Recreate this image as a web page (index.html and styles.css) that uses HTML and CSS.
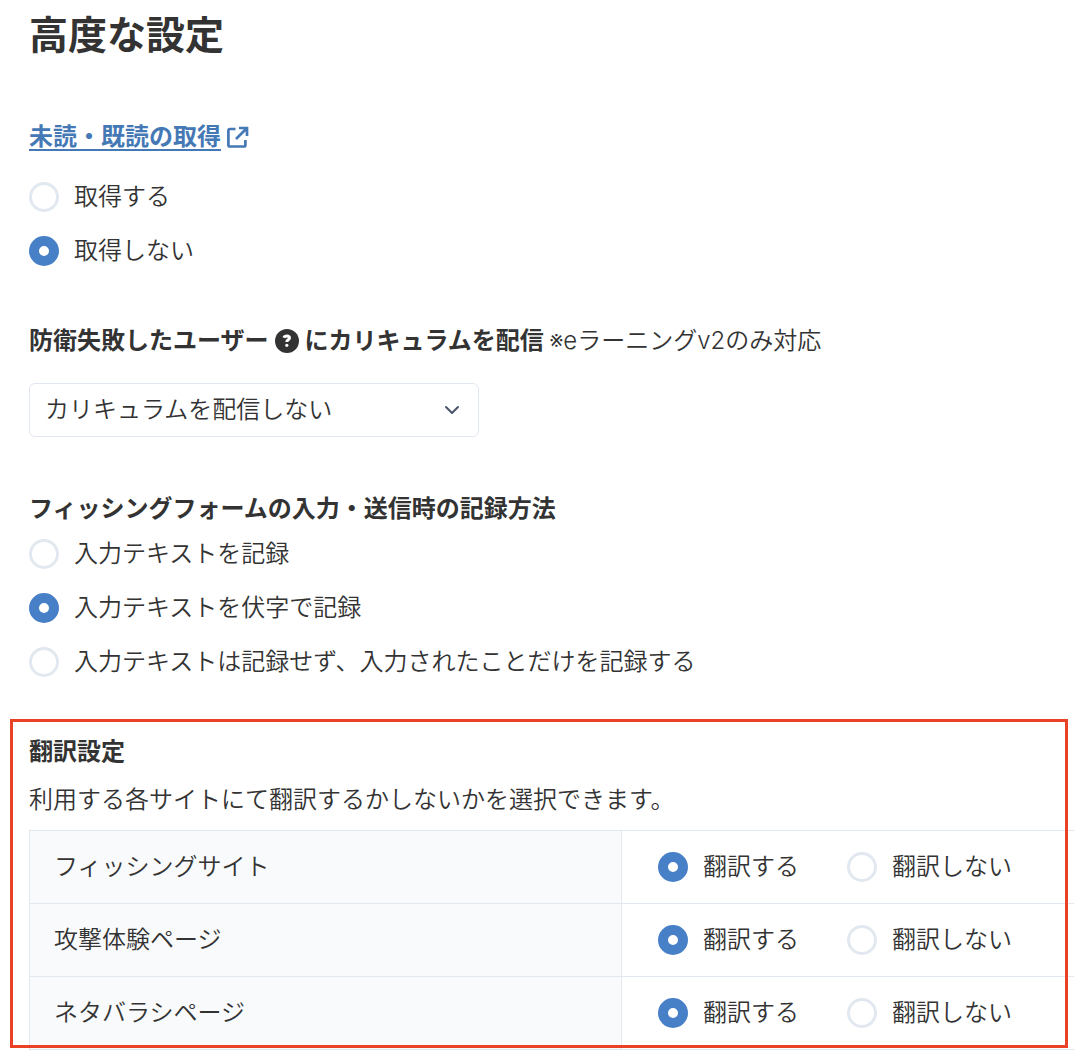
FILE: index.html
```
<!DOCTYPE html>
<html lang="ja">
<head>
<meta charset="utf-8">
<meta name="viewport" content="width=device-width, initial-scale=1">
<title>高度な設定</title>
<link rel="stylesheet" href="styles.css">
</head>
<body>
<form class="settings">
    <h1>高度な設定</h1>

    <section role="radiogroup" aria-labelledby="read-title">
        <h2 id="read-title"><a href="#"><span>未読・既読の取得</span><svg class="external" viewBox="0 0 24 24" aria-hidden="true"><path d="M10.500 4H5a1.600 1.600 0 0 0-1.600 1.600V19.900a1.600 1.600 0 0 0 1.600 1.600H18.800a1.600 1.600 0 0 0 1.600-1.600v-5M14 3h8V11M21.500 3.500L11 14"/></svg></a></h2>
        <div class="options spaced">
            <label class="option"><input type="radio" name="read" value="true">取得する</label>
            <label class="option"><input type="radio" name="read" value="false" checked>取得しない</label>
        </div>
    </section>

    <section>
        <h2><label for="curriculum">防衛失敗したユーザー</label><svg class="help" viewBox="0 0 24 24" aria-hidden="true"><circle cx="12" cy="12" r="12"/><path d="M8.900 8.800C9.300 7.600 10.400 7 11.800 7c1.600 0 2.700.8 2.700 2 0 1.900-2.700 1.800-2.700 3.900"/><circle class="dot" cx="11.800" cy="16.300" r="1.600"/></svg><label for="curriculum">にカリキュラムを配信 <small>※eラーニングv2のみ対応</small></label></h2>
        <div class="select">
            <select id="curriculum">
                <option>カリキュラムを配信しない</option>
            </select>
            <svg viewBox="0 0 18 18" aria-hidden="true"><path d="M3 6l6 6 6-6"/></svg>
        </div>
    </section>

    <section role="radiogroup" aria-labelledby="record-title">
        <h2 id="record-title">フィッシングフォームの入力・送信時の記録方法</h2>
        <div class="options">
            <label class="option"><input type="radio" name="record" value="text">入力テキストを記録</label>
            <label class="option"><input type="radio" name="record" value="mask" checked>入力テキストを伏字で記録</label>
            <label class="option"><input type="radio" name="record" value="none">入力テキストは記録せず、入力されたことだけを記録する</label>
        </div>
    </section>

    <section class="translate">
        <h2>翻訳設定</h2>
        <p>利用する各サイトにて翻訳するかしないかを選択できます。</p>
        <table>
            <tr>
                <th scope="row">フィッシングサイト</th>
                <td><div class="choices">
                    <label class="option"><input type="radio" name="phishing" value="true" checked>翻訳する</label>
                    <label class="option"><input type="radio" name="phishing" value="false">翻訳しない</label>
                </div></td>
            </tr>
            <tr>
                <th scope="row">攻撃体験ページ</th>
                <td><div class="choices">
                    <label class="option"><input type="radio" name="attack" value="true" checked>翻訳する</label>
                    <label class="option"><input type="radio" name="attack" value="false">翻訳しない</label>
                </div></td>
            </tr>
            <tr>
                <th scope="row">ネタバラシページ</th>
                <td><div class="choices">
                    <label class="option"><input type="radio" name="reveal" value="true" checked>翻訳する</label>
                    <label class="option"><input type="radio" name="reveal" value="false">翻訳しない</label>
                </div></td>
            </tr>
        </table>
        <div class="highlight"></div>
    </section>
</form>
</body>
</html>
```
FILE: styles.css
```
* {
    box-sizing: border-box;
}
body {
    margin: 0;
    background: #fff;
    color: #333;
    font: 350 24px/36px Inter, "Noto Sans CJK JP", sans-serif;
}
.settings {
    padding: 5px 0 8px 29px;
}
h1 {
    margin: 0;
    font-size: 39px;
    line-height: 60px;
}
h2 {
    margin: 0;
    font-size: 24px;
    line-height: 36px;
}
h2 small {
    font-size: 24px;
    font-weight: 350;
}
section {
    margin-top: 54px;
}
a {
    color: #4579b5;
    text-decoration: none;
}
a span {
    text-decoration: underline;
    text-decoration-thickness: 2px;
    text-underline-offset: 4px;
}
svg {
    fill: none;
    stroke: currentColor;
}
.external {
    width: 24px;
    height: 24px;
    margin-left: 4px;
    vertical-align: -4px;
    stroke-width: 2.700;
}
.help {
    width: 24px;
    height: 24px;
    margin: 0 6px;
    vertical-align: -4px;
    stroke: #fff;
    stroke-width: 3;
}
.help circle {
    fill: #333;
    stroke: none;
}
.help .dot {
    fill: #fff;
}

/* radio buttons */
.options {
    display: grid;
    gap: 18px;
    justify-items: start;
    margin-top: 9px;
}
.options.spaced {
    margin-top: 24px;
}
.option {
    display: flex;
    align-items: center;
    gap: 15px;
}
.option input {
    appearance: none;
    flex: none;
    width: 30px;
    height: 30px;
    margin: 0;
    border: 3px solid #e2e8f0;
    border-radius: 50%;
    background: #fff;
}
.option input:checked {
    border: 10px solid #4880c8;
}

/* drop-down, the arrow shares its grid cell */
.select {
    display: grid;
    align-items: center;
    max-width: 450px;
    margin-top: 24px;
}
.select select {
    grid-area: 1 / 1;
    appearance: none;
    height: 54px;
    padding: 0 48px 0 15px;
    border: 1px solid #e2e8f0;
    border-radius: 6px;
    background: #fff;
    color: inherit;
    font: inherit;
}
.select svg {
    grid-area: 1 / 1;
    justify-self: end;
    width: 18px;
    height: 18px;
    margin-right: 18px;
    stroke: #4a5568;
    stroke-width: 2;
    stroke-linecap: round;
    stroke-linejoin: round;
    pointer-events: none;
}

.translate {
    position: relative;
}
.translate p {
    margin: 12px 0;
}
table {
    width: 100%;
    border-collapse: collapse;
}
th, td {
    height: 73px;
    padding: 0 24px;
    border: 1px solid #e2e8f0;
    text-align: left;
}
th {
    width: 592px;
    background: #f9fafc;
    font-weight: 350;
}
td {
    padding-left: 36px;
    border-right: none;
}
.choices {
    display: flex;
    gap: 48px;
}

/* red frame drawn over the translation settings */
.highlight {
    position: absolute;
    top: -15px;
    right: 6px;
    bottom: 2px;
    left: -19px;
    border: 3px solid #ea4226;
    pointer-events: none;
}
```
